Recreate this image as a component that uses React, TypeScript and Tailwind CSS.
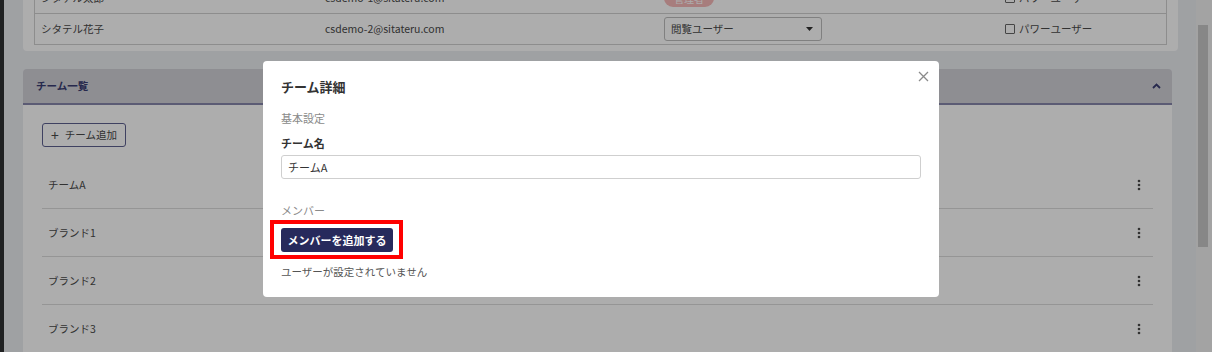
import React from "react";

interface MemberRow {
  name: string;
  email: string;
  role: "badge" | "select";
}

const members: MemberRow[] = [
  { name: "シタテル太郎", email: "csdemo-1@sitateru.com", role: "badge" },
  { name: "シタテル花子", email: "csdemo-2@sitateru.com", role: "select" },
];

const teams = ["チームA", "ブランド1", "ブランド2", "ブランド3"];

const Kebab = () => (
  <svg width="4" height="12" viewBox="0 0 4 12" className="text-[#4a4a4a]">
    <circle cx="2" cy="2" r="1.3" fill="currentColor" />
    <circle cx="2" cy="6" r="1.3" fill="currentColor" />
    <circle cx="2" cy="10" r="1.3" fill="currentColor" />
  </svg>
);

const Checkbox = ({ label }: { label: string }) => (
  <div className="flex items-center gap-[4px] pl-[6px]">
    <span className="w-[10px] h-[10px] border border-[#666] rounded-[1px] bg-white" />
    <span>{label}</span>
  </div>
);

export default function App() {
  return (
    <div className="relative w-[1212px] h-[352px] overflow-hidden flex text-[10.5px] text-[#4a4a4a] font-['Noto_Sans_CJK_JP','Noto_Sans',sans-serif]">
      <div className="w-[4px] bg-[#2f3133]" />

      <div className="flex-1 flex flex-col bg-[#ebedf1] pl-[19px]">
        {/* member table card */}
        <div className="-mt-[25px] mr-[18px] bg-white rounded-[4px] px-[11px] pt-[7px] pb-[6px]">
          <div className="border border-[#d0d0d0]">
            {members.map((m, i) => (
              <div
                key={m.email}
                className={`grid grid-cols-[284px_339px_341px_1fr] items-center h-[30px] ${
                  i === 0 ? "border-b border-[#d0d0d0] h-[31px]" : ""
                }`}
              >
                <div className="pl-[6px]">{m.name}</div>
                <div className="pl-[6px]">{m.email}</div>
                <div className="pl-[6px]">
                  {m.role === "badge" ? (
                    <span className="inline-flex items-center h-[18px] px-[10px] rounded-full bg-[#f7b9b9] text-white text-[10px]">
                      管理者
                    </span>
                  ) : (
                    <div className="w-[158px] h-[24px] border border-[#bdbdbd] rounded-[3px] bg-white flex items-center justify-between pl-[6px] pr-[8px]">
                      <span>閲覧ユーザー</span>
                      <svg width="7" height="4" viewBox="0 0 7 4">
                        <path d="M0 0h7L3.5 4z" fill="#333" />
                      </svg>
                    </div>
                  )}
                </div>
                <Checkbox label="パワーユーザー" />
              </div>
            ))}
          </div>
        </div>

        {/* team list card */}
        <div className="mt-[18px] mr-[24px] flex-1 flex flex-col rounded-t-[4px] overflow-hidden">
          <div className="h-[36px] shrink-0 bg-[#d1d2d8] border-b-2 border-[#8787ab] flex items-center justify-between pl-[13px] pr-[11px]">
            <span className="font-bold text-[#3a3d72]">チーム一覧</span>
            <svg width="9" height="6" viewBox="0 0 9 6">
              <path d="M1 5l3.5-3.5L8 5" fill="none" stroke="#3a3d72" strokeWidth="1.8" />
            </svg>
          </div>
          <div className="flex-1 bg-white px-[19px] pt-[18px]">
            <button className="h-[24px] px-[8px] border border-[#5e6190] rounded-[3px] flex items-center gap-[6px] text-[#4a4a4a]">
              <span className="text-[14px] leading-none">+</span>
              <span>チーム追加</span>
            </button>
            <div className="mt-[14px]">
              {teams.map((t) => (
                <div
                  key={t}
                  className="h-[48px] border-b border-[#dcdcdc] flex items-center justify-between pl-[6px] pr-[12px]"
                >
                  <span>{t}</span>
                  <Kebab />
                </div>
              ))}
            </div>
          </div>
        </div>
      </div>

      {/* scrollbar */}
      <div className="w-[16px] bg-[#f1f1f1] pt-[25px] pl-[2px]">
        <div className="w-[10px] h-[222px] bg-[#c8c8c8]" />
      </div>

      {/* dimmer */}
      <div className="absolute inset-0 bg-black/[0.32]" />

      {/* modal */}
      <div className="absolute left-[263px] top-[61px] w-[676px] h-[236px] bg-white rounded-[4px] px-[18px] pt-[17px] text-[11px] text-[#444]">
        <button className="absolute right-[10px] top-[10px] w-[11px] h-[11px]">
          <svg width="11" height="11" viewBox="0 0 11 11">
            <path d="M1 1l9 9M10 1l-9 9" stroke="#8a8a8a" strokeWidth="1.3" />
          </svg>
        </button>
        <div className="text-[13px] leading-[18px] font-bold text-[#333]">チーム詳細</div>
        <div className="mt-[14px] leading-[16px] text-[#8a8a8a]">基本設定</div>
        <div className="mt-[9px] leading-[16px] font-bold text-[#333]">チーム名</div>
        <div className="mt-[4px] h-[24px] border border-[#cfcfcf] rounded-[3px] flex items-center pl-[6px] text-[#333]">
          チームA
        </div>
        <div className="mt-[23px] leading-[16px] text-[#8a8a8a]">メンバー</div>
        <div className="mt-[10px] relative inline-block">
          <button className="h-[24px] w-[112px] rounded-[3px] bg-[#272a5c] text-white font-bold flex items-center justify-center">
            メンバーを追加する
          </button>
          <div className="absolute -left-[11px] -right-[10px] -top-[8px] -bottom-[7px] border-4 border-[#ff0000]" />
        </div>
        <div className="mt-[12px] leading-[16px] text-[10.5px] text-[#555]">ユーザーが設定されていません</div>
      </div>
    </div>
  );
}
